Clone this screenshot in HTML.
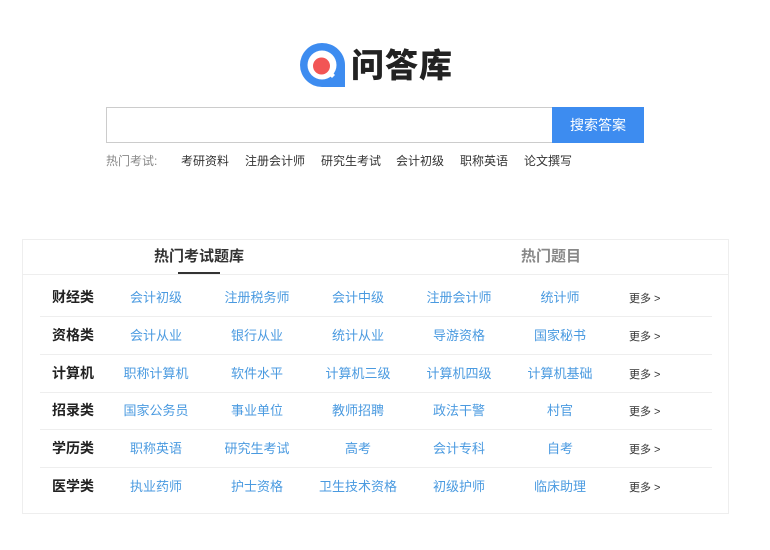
<!DOCTYPE html>
<html><head><meta charset="utf-8"><style>
*{margin:0;padding:0;box-sizing:border-box}
body{width:770px;height:550px;background:#fff;position:relative;font-family:"Liberation Sans","Noto Sans CJK SC",sans-serif;overflow:hidden}
.a{position:absolute;white-space:nowrap}
.logo-t{left:351px;top:44px;font-size:33px;font-weight:900;color:#222;letter-spacing:1px;line-height:44px}
.search{left:106px;top:107px;width:447px;height:36px;border:1px solid #ccc;border-right:none}
.btn{left:552px;top:107px;width:92px;height:36px;background:#3d8cf0;color:#fff;font-size:14px;text-align:center;line-height:36px}
.hot{top:152px;font-size:12px;line-height:18px;color:#333}
.panel{left:22px;top:239px;width:707px;height:275px;border:1px solid #eee}
.hdr{left:23px;top:274px;width:705px;height:1px;background:#eee}
.tab{font-size:15px;font-weight:bold;line-height:20px;top:247px}
.row{font-size:13px;line-height:18px;color:#4a9ae0;transform:translateX(-50%)}
.cat{font-size:14px;line-height:18px;font-weight:bold;color:#222;transform:translateX(-50%)}
.more{font-size:11px;color:#333}
.sep{left:40px;width:672px;height:1px;background:#eee}
</style></head><body>
<svg class="a" style="left:298px;top:41px" width="50" height="50" viewBox="0 0 50 50">
<path d="M24 2 A22 22 0 1 0 24 46 L47 46 L47 24 A23 22 0 0 0 24 2Z" fill="#3d8cf0"/>
<circle cx="24" cy="24" r="14.5" fill="#fff"/>
<circle cx="23.5" cy="25" r="8.5" fill="#f25555"/>
<path d="M29 32 L34 37 L37 34 L32 29Z" fill="#fff"/>
</svg>
<div class="a logo-t">问答库</div>
<div class="a search"></div>
<div class="a btn">搜索答案</div>
<div class="a hot" style="left:106px;color:#888">热门考试:</div>
<div class="a hot" style="left:181px">考研资料</div>
<div class="a hot" style="left:245px">注册会计师</div>
<div class="a hot" style="left:321px">研究生考试</div>
<div class="a hot" style="left:396px">会计初级</div>
<div class="a hot" style="left:460px">职称英语</div>
<div class="a hot" style="left:524px">论文撰写</div>
<div class="a panel"></div>
<div class="a hdr"></div>
<div class="a tab" style="left:154px;color:#333">热门考试题库</div>
<div class="a" style="left:178px;top:272px;width:42px;height:2px;background:#333"></div>
<div class="a tab" style="left:521px;color:#888">热门题目</div>
<div id="rows"></div>
<script>
var d=[["财经类","会计初级","注册税务师","会计中级","注册会计师","统计师"],
["资格类","会计从业","银行从业","统计从业","导游资格","国家秘书"],
["计算机","职称计算机","软件水平","计算机三级","计算机四级","计算机基础"],
["招录类","国家公务员","事业单位","教师招聘","政法干警","村官"],
["学历类","职称英语","研究生考试","高考","会计专科","自考"],
["医学类","执业药师","护士资格","卫生技术资格","初级护师","临床助理"]];
var xs=[73,156,257,358,459,560],h="";
d.forEach(function(r,i){var y=289+i*37.8;
r.forEach(function(t,j){h+='<div class="a '+(j?'row':'cat')+'" style="left:'+xs[j]+'px;top:'+(j?y:y-1)+'px">'+t+'</div>';});
h+='<div class="a more" style="left:629px;top:'+(y+1)+'px">更多 &gt;</div>';
if(i<5)h+='<div class="a sep" style="top:'+(y+27)+'px"></div>';});
document.getElementById("rows").innerHTML=h;
</script>
</body></html>
